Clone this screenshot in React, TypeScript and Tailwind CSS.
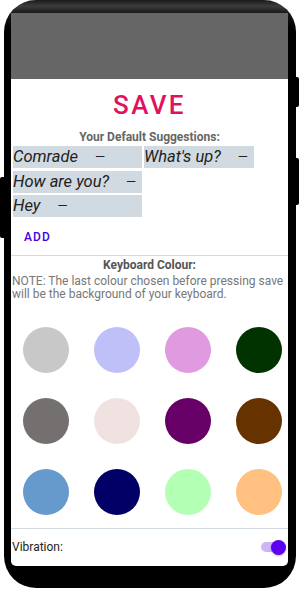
const swatches = [
  ["#c8c8c8", "#bfc0f8", "#e09be0", "#003300"],
  ["#757070", "#efe2e0", "#660066", "#663300"],
  ["#6699cc", "#000066", "#b3ffb3", "#ffc080"],
];

function Chip({ label, width }: { label: string; width: string }) {
  return (
    <div className={`${width} h-[22px] flex items-center bg-[#d1d9e1]`}>
      <span className="italic text-[16.5px] leading-[22px] text-[#222]">{label}</span>
      <span className="ml-[17px] text-[13px] leading-[22px] text-[#222]">—</span>
    </div>
  );
}

export default function App() {
  return (
    <div className="relative w-[300px] h-[589px] bg-white font-['Roboto','Liberation_Sans',sans-serif]">
      {/* side buttons */}
      <div className="absolute left-0 top-[177px] w-[6px] h-[61px] bg-black rounded-l-[2px]" />
      <div className="absolute right-[1px] top-[77px] w-[6px] h-[30px] bg-black rounded-r-[2px]" />
      <div className="absolute right-[1px] top-[158px] w-[6px] h-[47px] bg-black rounded-r-[2px]" />

      <div className="relative ml-[4px] w-[292px] h-[588px] rounded-[32px] bg-[linear-gradient(180deg,#1a1a1a_0px,#3c3c3c_6px,#151515_14px,#000_30px)] pt-[13px] pl-[7px] pr-[8px] pb-[22px]">
        <div className="h-full bg-white flex flex-col overflow-hidden rounded-b-[5px]">
          <div className="h-[66px] bg-[#666666] shrink-0" />

          <div className="mt-[11px] text-center text-[26px] leading-[30px] font-medium tracking-[0.09em] text-[#e0115f]">
            SAVE
          </div>

          <div className="mt-[10px] text-center text-[12px] leading-[14px] font-bold text-[#666]">
            Your Default Suggestions:
          </div>

          <div className="mt-[2px] px-[2px] grid grid-cols-[129px_110px] gap-x-[2px] gap-y-[2.5px]">
            <Chip label="Comrade" width="w-[129px]" />
            <Chip label="What's up?" width="w-[110px]" />
            <Chip label="How are you?" width="w-[129px]" />
            <div />
            <Chip label="Hey" width="w-[129px]" />
          </div>

          <div className="mt-[13px] pl-[13px] text-[12px] leading-[14px] font-medium tracking-[0.09em] text-[#4300e6]">
            ADD
          </div>

          <div className="mt-[11px] h-px bg-[#d3dbe2]" />

          <div className="mt-[2px] text-center text-[12px] leading-[14px] font-bold text-[#555]">
            Keyboard Colour:
          </div>
          <p className="mt-[3px] pl-[1px] text-[12px] leading-[13px] text-[#777]">
            NOTE: The last colour chosen before pressing save will be the background of your keyboard.
          </p>

          <div className="mt-[26px] pl-[12px] flex flex-col gap-y-[25px]">
            {swatches.map((row, i) => (
              <div key={i} className="flex gap-x-[25px]">
                {row.map((c) => (
                  <div key={c} className="w-[46px] h-[46px] rounded-full" style={{ backgroundColor: c }} />
                ))}
              </div>
            ))}
          </div>

          <div className="mt-[13px] h-px bg-[#d3dbe2]" />

          <div className="h-[38px] flex items-center justify-between pl-[1px] pr-[2px]">
            <span className="text-[12px] text-[#222]">Vibration:</span>
            <div className="relative w-[25px] h-[15px]">
              <div className="absolute left-0 top-[2.5px] w-[22px] h-[10px] rounded-full bg-[#cdb5f8]" />
              <div className="absolute right-0 top-0 w-[15px] h-[15px] rounded-full bg-[#5e00f0] shadow-[0_1px_2px_rgba(0,0,0,0.3)]" />
            </div>
          </div>
        </div>
      </div>
    </div>
  );
}
